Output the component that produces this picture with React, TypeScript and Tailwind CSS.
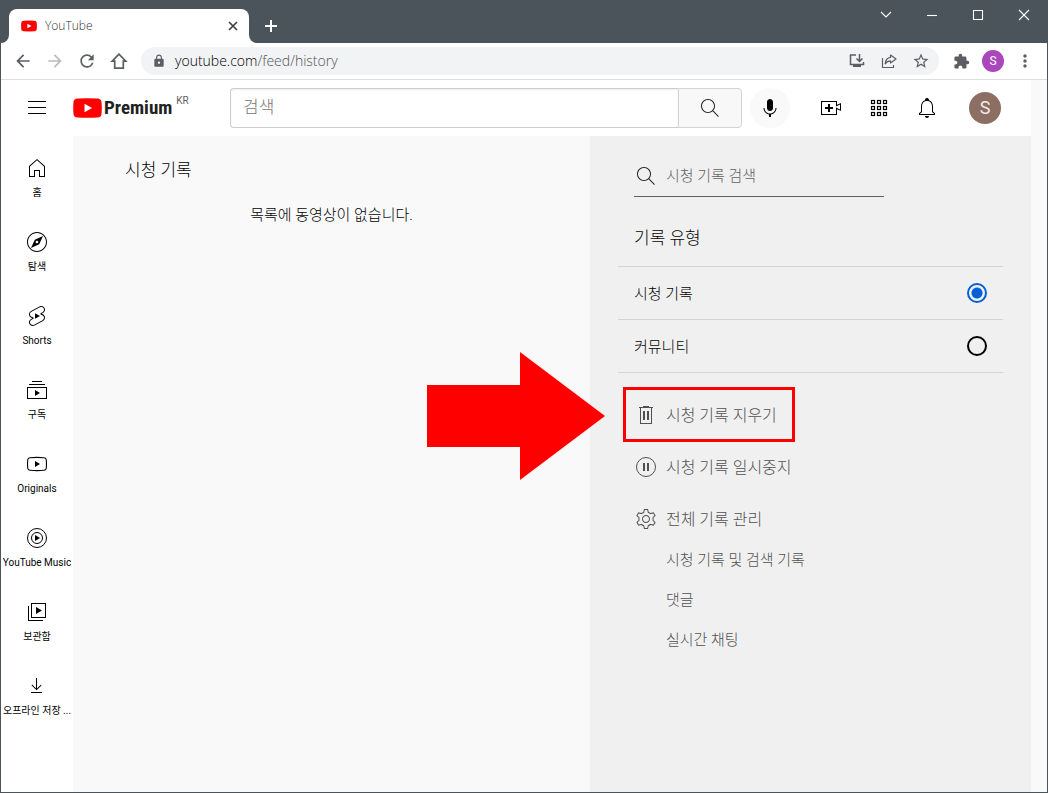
import type { ReactNode } from 'react'
import { MdArrowBack, MdArrowForward, MdExtension, MdLock, MdMoreVert, MdRefresh, MdStarBorder } from 'react-icons/md'

type IconProps = { d?: string; className?: string; children?: ReactNode }

function Icon({ d, className = '', children }: IconProps) {
  return (
    <svg viewBox="0 0 24 24" className={`size-6 shrink-0 fill-current ${className}`} aria-hidden="true">
      {d && <path d={d} />}
      {children}
    </svg>
  )
}

const SEARCH =
  'M20.87,20.17l-5.59-5.59C16.35,13.35,17,11.75,17,10c0-3.87-3.13-7-7-7s-7,3.13-7,7s3.13,7,7,7c1.75,0,3.35-0.65,4.58-1.71l5.59,5.59L20.87,20.17z M10,16c-3.31,0-6-2.69-6-6s2.69-6,6-6s6,2.69,6,6S13.31,16,10,16z'
const HOME = 'M12,4.33l7,6.12V20H15V14H9v6H5V10.45l7-6.12M12,3,4,10V21h6V15h4v6h6V10L12,3Z'
const EXPLORE =
  'M9.8,9.8l-3.83,8.23l8.23-3.83l3.83-8.23L9.8,9.8z M13.08,12.77c-0.21,0.29-0.51,0.48-0.86,0.54c-0.07,0.01-0.15,0.02-0.22,0.02c-0.28,0-0.54-0.08-0.77-0.25c-0.29-0.21-0.48-0.51-0.54-0.86c-0.06-0.35,0.02-0.71,0.23-0.99c0.21-0.29,0.51-0.48,0.86-0.54c0.35-0.06,0.7,0.02,0.99,0.23c0.29,0.21,0.48,0.51,0.54,0.86C13.37,12.13,13.29,12.48,13.08,12.77z M12,3c4.96,0,9,4.04,9,9s-4.04,9-9,9s-9-4.04-9-9S7.04,3,12,3 M12,2C6.48,2,2,6.48,2,12s4.48,10,10,10s10-4.48,10-10S17.52,2,12,2L12,2z'
const SHORTS =
  'M10 14.65v-5.3L15 12l-5 2.65zm7.77-4.33-1.2-.5L18 9.06c1.84-.96 2.53-3.23 1.56-5.06s-3.24-2.53-5.07-1.56L6 6.94c-1.29.68-2.07 2.04-2 3.49.07 1.42.93 2.67 2.22 3.25.03.01 1.2.5 1.2.5L6 14.93c-1.83.97-2.53 3.24-1.56 5.07.97 1.83 3.24 2.53 5.07 1.56l8.5-4.5c1.29-.68 2.06-2.04 1.99-3.49-.07-1.42-.94-2.68-2.23-3.25zm-.23 5.86-8.5 4.5c-1.34.71-3.01.2-3.72-1.14-.71-1.34-.2-3.01 1.14-3.72l2.04-1.08v-1.21l-.69-.28-1.11-.46c-.99-.41-1.65-1.35-1.7-2.41-.05-1.06.52-2.06 1.46-2.56l8.5-4.5c1.34-.71 3.01-.2 3.72 1.14.71 1.34.2 3.01-1.14 3.72L15.5 9.26v1.21l1.8.74c.99.41 1.65 1.35 1.7 2.41.05 1.06-.52 2.06-1.46 2.56z'
const SUBSCRIPTIONS = 'M10,18v-6l5,3L10,18z M17,3H7v1h10V3z M20,6H4v1h16V6z M22,9H2v12h20V9z M3,10h18v10H3V10z'
const LIBRARY = 'M11,7l6,3.5L11,14V7L11,7z M18,20H4V6H3v15h15V20z M21,18H6V3h15V18z M7,17h13V4H7V17z'
const DOWNLOAD = 'M17,18v1H6v-1H17z M16.5,11.4l-0.7-0.7L12,14.4V4h-1v10.4l-3.8-3.8l-0.7,0.7l5,5L16.5,11.4z'
const TRASH = 'M11,17H9V8h2V17z M15,8h-2v9h2V8z M19,4v1h-1v16H6V5H5V4h4V3h6v1H19z M17,5H7v15h10V5z'
const CREATE =
  'M14,13h-3v3H9v-3H6v-2h3V8h2v3h3V13z M17,6H3v12h14v-6.39l4,1.83V8.56l-4,1.83V6 M18,5v3.83L22,7v8l-4-1.83V19H2V5H18L18,5z'
const BELL =
  'M10,20h4c0,1.1-0.9,2-2,2S10,21.1,10,20z M20,17.35V19H4v-1.65l2-1.88v-5.15c0-2.92,1.56-5.22,4-5.98V3.96c0-1.42,1.49-2.5,2.99-1.76C13.64,2.52,14,3.23,14,3.96l0,0.39c2.44,0.75,4,3.06,4,5.98v5.15L20,17.35z M19,17.77l-2-1.88v-5.47c0-2.47-1.19-4.36-3.13-5.1c-1.26-0.53-2.64-0.5-3.84,0.03C8.15,6.11,7,7.99,7,10.42v5.47l-2,1.88V18h14V17.77z'
const MIC =
  'M12 3C10.34 3 9 4.37 9 6.07V11.93C9 13.63 10.34 15 12 15C13.66 15 15 13.63 15 11.93V6.07C15 4.37 13.66 3 12 3ZM18.5 12H17.5C17.5 15.03 15.03 17.5 12 17.5C8.97 17.5 6.5 15.03 6.5 12H5.5C5.5 15.24 7.89 17.93 11 18.41V21H13V18.41C16.11 17.93 18.5 15.24 18.5 12Z'
const GEAR =
  'M12,9c1.65,0,3,1.35,3,3s-1.35,3-3,3s-3-1.35-3-3S10.35,9,12,9 M12,8c-2.21,0-4,1.79-4,4s1.79,4,4,4s4-1.79,4-4S14.21,8,12,8L12,8z M13.22,3l0.55,2.2l0.13,0.51l0.5,0.18c0.61,0.23,1.19,0.56,1.72,0.98l0.4,0.32l0.5-0.14l2.17-0.62l1.22,2.11l-1.63,1.59l-0.37,0.36l0.08,0.51c0.05,0.32,0.08,0.64,0.08,0.98s-0.03,0.66-0.08,0.98l-0.08,0.51l0.37,0.36l1.63,1.59l-1.22,2.11l-2.17-0.62l-0.5-0.14l-0.4,0.32c-0.53,0.43-1.11,0.76-1.72,0.98l-0.5,0.18l-0.13,0.51L13.22,21h-2.44l-0.55-2.2l-0.13-0.51l-0.5-0.18C9,17.88,8.42,17.55,7.88,17.12l-0.4-0.32l-0.5,0.14l-2.17,0.62L3.6,15.44l1.63-1.59l0.37-0.36l-0.08-0.51C5.47,12.66,5.44,12.33,5.44,12s0.03-0.66,0.08-0.98l0.08-0.51l-0.37-0.36L3.6,8.56l1.22-2.11l2.17,0.62l0.5,0.14l0.4-0.32C8.42,6.45,9,6.12,9.61,5.9l0.5-0.18l0.13-0.51L10.78,3H13.22 M14,2h-4L9.26,4.96c-0.73,0.27-1.4,0.66-2,1.14L4.34,5.27l-2,3.46l2.19,2.13C4.47,11.23,4.44,11.61,4.44,12s0.03,0.77,0.09,1.14l-2.19,2.13l2,3.46l2.92-0.83c0.6,0.48,1.27,0.87,2,1.14L10,22h4l0.74-2.96c0.73-0.27,1.4-0.66,2-1.14l2.92,0.83l2-3.46l-2.19-2.13c0.06-0.37,0.09-0.75,0.09-1.14s-0.03-0.77-0.09-1.14l2.19-2.13l-2-3.46L16.74,6.1c-0.6-0.48-1.27-0.87-2-1.14L14,2L14,2z'

const sidebarItems: { label: string; icon: ReactNode }[] = [
  { label: '홈', icon: <Icon d={HOME} /> },
  { label: '탐색', icon: <Icon d={EXPLORE} /> },
  { label: 'Shorts', icon: <Icon d={SHORTS} /> },
  { label: '구독', icon: <Icon d={SUBSCRIPTIONS} /> },
  {
    label: 'Originals',
    icon: (
      <Icon d="M10 9l5 3-5 3z">
        <path
          d="M5 5.7Q12 5 19 5.7Q21.2 5.9 21.3 8Q21.7 12 21.3 16Q21.2 18.1 19 18.3Q12 19 5 18.3Q2.8 18.1 2.7 16Q2.3 12 2.7 8Q2.8 5.9 5 5.7z"
          fill="none"
          stroke="currentColor"
          strokeWidth="1.1"
        />
      </Icon>
    ),
  },
  {
    label: 'YouTube Music',
    icon: (
      <Icon d="M10 9l5 3-5 3z">
        <circle cx="12" cy="12" r="9.5" fill="none" stroke="currentColor" />
        <circle cx="12" cy="12" r="5.5" fill="none" stroke="currentColor" />
      </Icon>
    ),
  },
  { label: '보관함', icon: <Icon d={LIBRARY} /> },
  { label: '오프라인 저장 ...', icon: <Icon d={DOWNLOAD} /> },
]

function PlayBadge({ className }: { className: string }) {
  return (
    <svg viewBox="0 0 29 20" className={className} aria-hidden="true">
      <path
        d="M4.5.4Q14.500 0 24.500.4Q28 .7 28.400 3.500Q29.200 10 28.400 16.500Q28 19.300 24.500 19.600Q14.500 20 4.500 19.600Q1 19.300.6 16.500Q-.2 10 .6 3.500Q1 .7 4.500.4z"
        fill="#ff0000"
      />
      <path d="M11.500 5.700v8.600l7.600-4.300z" fill="#fff" />
    </svg>
  )
}

function TitleBar() {
  return (
    <div className="flex h-[42px] items-start bg-[#4b545b] text-white">
      <div className="flex items-end self-stretch">
        <svg viewBox="0 0 8 8" className="size-2 fill-white" aria-hidden="true">
          <path d="M8 0v8H0a8 8 0 0 0 8-8z" />
        </svg>
        <div className="flex h-[34px] w-60 items-center rounded-t-lg bg-white pr-2 pl-3 text-[#303336]">
          <PlayBadge className="h-3 w-4" />
          <span className="ml-2 flex-1 font-['Open_Sans'] text-xs font-light">YouTube</span>
          <button aria-label="탭 닫기" className="flex size-4 items-center justify-center">
            <svg viewBox="0 0 10 10" className="size-[10px]" stroke="#3c4043" strokeWidth="1.700">
              <path d="M1 1l8 8M9 1l-8 8" />
            </svg>
          </button>
        </div>
        <svg viewBox="0 0 8 8" className="size-2 fill-white" aria-hidden="true">
          <path d="M0 0v8h8a8 8 0 0 1-8-8z" />
        </svg>
      </div>
      <button aria-label="새 탭" className="mt-[11px] flex size-7 items-center justify-center">
        <svg viewBox="0 0 12 12" className="size-3" stroke="currentColor" strokeWidth="2">
          <path d="M6 0v12M0 6h12" />
        </svg>
      </button>
      <div className="ml-auto flex">
        {[
          ['탭 검색', 'M1 3l5 5 5-5'],
          ['최소화', 'M1 6.500h10'],
          ['최대화', 'M1.500 1.500h9v9h-9z'],
          ['닫기', 'M1 1l10 10M11 1l-10 10'],
        ].map(([label, d]) => (
          <button key={label} aria-label={label} className="flex h-7 w-[46px] items-center justify-center">
            <svg viewBox="0 0 12 12" className="size-3" fill="none" stroke="currentColor" strokeWidth="1.100">
              <path d={d} />
            </svg>
          </button>
        ))}
      </div>
    </div>
  )
}

function ToolButton({ label, children, className = '' }: { label: string; children: ReactNode; className?: string }) {
  return (
    <button aria-label={label} className={`flex h-7 w-8 shrink-0 items-center justify-center ${className}`}>
      {children}
    </button>
  )
}

function AddressBar() {
  return (
    <div className="flex h-[37px] items-center gap-[6px] border-b border-[#dcdde0] bg-white px-[6px] text-[#5a5e63]">
      <div className="flex">
        <ToolButton label="뒤로">
          <MdArrowBack className="size-5" />
        </ToolButton>
        <ToolButton label="앞으로" className="text-[#b9bbbe]">
          <MdArrowForward className="size-5" />
        </ToolButton>
        <ToolButton label="새로고침">
          <MdRefresh className="size-5" />
        </ToolButton>
        <ToolButton label="홈페이지">
          <svg viewBox="0 0 20 20" className="size-5" fill="none" stroke="currentColor" strokeWidth="1.700">
            <path d="M10 3.200L3.200 10.200h2.500v7h8.600v-7h2.500z" />
          </svg>
        </ToolButton>
      </div>
      <div className="flex h-7 flex-1 items-center rounded-full bg-[#f1f3f4] pr-[2px] pl-[11px]">
        <MdLock className="size-[14px]" />
        <div className="ml-[9px] flex-1 font-['Open_Sans'] text-sm font-light text-[#505357]">
          <span className="text-black">youtube.com</span>/feed/history
        </div>
        <ToolButton label="앱 설치">
          <svg viewBox="0 0 16 16" className="size-4" fill="none" stroke="currentColor" strokeWidth="1.500">
            <path d="M7 2H1.500v9.500h13V9M10.500 1v7M7.500 5.500l3 3 3-3" />
            <path d="M4 12h8v2H4z" fill="currentColor" stroke="none" />
          </svg>
        </ToolButton>
        <ToolButton label="공유">
          <svg viewBox="0 0 16 16" className="size-4" fill="none" stroke="currentColor" strokeWidth="1.200">
            <path d="M1.500 5v9.500h11V12" />
            <path d="M9.500 2l5.500 4-5.500 4V7.800C7 7.800 5.500 8.800 4.200 10.800 4.500 7 6.500 4.700 9.500 4.400z" strokeLinejoin="round" />
          </svg>
        </ToolButton>
        <ToolButton label="북마크">
          <MdStarBorder className="size-[18px]" />
        </ToolButton>
      </div>
      <div className="flex">
        <ToolButton label="확장 프로그램">
          <MdExtension className="size-[17px]" />
        </ToolButton>
        <ToolButton label="프로필">
          <span className="flex size-[22px] items-center justify-center rounded-full bg-[#ab47bc] text-xs text-white">S</span>
        </ToolButton>
        <ToolButton label="메뉴">
          <MdMoreVert className="size-5" />
        </ToolButton>
      </div>
    </div>
  )
}

function Masthead() {
  return (
    <header className="flex h-14 items-center bg-white pr-[30px]">
      <div className="flex w-[229px] shrink-0 items-center pl-6">
        <button aria-label="가이드">
          <Icon d="M21,6H3V5h18V6z M21,11H3v1h18V11z M21,17H3v1h18V17z" />
        </button>
        <a href="#" className="ml-6 flex items-center">
          <PlayBadge className="h-5 w-[29px]" />
          <span className="ml-[2px] font-['Liberation_Sans_Narrow','Roboto_Condensed',sans-serif] text-[19px] leading-6 font-bold text-[#212121]">
            Premium
          </span>
          <span className="ml-1 self-start text-[10px] leading-[10px] text-[#606060]">KR</span>
        </a>
      </div>
      <form className="flex h-10 flex-1" onSubmit={(e) => e.preventDefault()}>
        <input
          aria-label="검색"
          placeholder="검색"
          className="min-w-0 flex-1 rounded-l-sm border border-r-0 border-[#ccc] bg-white px-3 text-[17px] font-light shadow-[inset_0_1px_2px_#eee] outline-none placeholder:text-[#777]"
        />
        <button
          aria-label="검색 실행"
          className="flex w-16 items-center justify-center rounded-r-sm border border-[#d3d3d3] bg-[#f8f8f8] text-[#222]"
        >
          <Icon d={SEARCH} />
        </button>
      </form>
      <button aria-label="음성 검색" className="ml-2 flex size-10 items-center justify-center rounded-full bg-[#f9f9f9]">
        <Icon d={MIC} />
      </button>
      <div className="ml-[29px] flex gap-6">
        <button aria-label="만들기">
          <Icon d={CREATE} />
        </button>
        <button aria-label="앱">
          <Icon>
            <g fill="none" stroke="currentColor" strokeWidth="1.200">
              {[4, 10, 16].map((y) =>
                [4, 10, 16].map((x) => <rect key={`${x}-${y}`} x={x + 0.5} y={y + 0.5} width="3" height="3" />),
              )}
            </g>
          </Icon>
        </button>
        <button aria-label="알림">
          <Icon d={BELL} />
        </button>
      </div>
      <button
        aria-label="계정"
        className="ml-[30px] flex size-8 items-center justify-center rounded-full bg-[#8d6e63] text-lg text-[#efebe9]"
      >
        S
      </button>
    </header>
  )
}

function Sidebar() {
  return (
    <nav className="w-[72px] shrink-0 bg-white pt-1">
      {sidebarItems.map(({ label, icon }) => (
        <a key={label} href="#" className="flex h-[74px] flex-col items-center gap-[6px] pt-4">
          {icon}
          <span className="text-[10px] leading-[14px] whitespace-nowrap">{label}</span>
        </a>
      ))}
    </nav>
  )
}

function HistoryType({ label, checked }: { label: string; checked?: boolean }) {
  return (
    <label className="flex h-[53px] items-center justify-between border-b border-[#d4d4d4] px-4 text-[15px] font-light">
      <span className="pt-[2px]">{label}</span>
      <input
        type="radio"
        name="history-type"
        defaultChecked={checked}
        className="size-5 appearance-none rounded-full border-2 border-black checked:border-[#065fd4] checked:bg-[radial-gradient(circle,#065fd4_5px,transparent_6px)]"
      />
    </label>
  )
}

function ActionButton({ icon, label }: { icon: ReactNode; label: string }) {
  return (
    <button className="flex h-10 items-center gap-2 text-base font-light">
      {icon}
      <span className="pt-[2px]">{label}</span>
    </button>
  )
}

function HistoryPanel() {
  return (
    <aside className="w-[441px] shrink-0 bg-[#f0f0f0] px-7 pt-4">
      <div className="ml-4 flex h-[45px] w-[250px] items-center gap-2 border-b border-[#606060] pt-1">
        <Icon d={SEARCH} className="text-[#222]" />
        <input
          aria-label="시청 기록 검색"
          placeholder="시청 기록 검색"
          className="min-w-0 flex-1 bg-transparent text-[15px] font-light outline-none placeholder:text-[#606060]"
        />
      </div>
      <h2 className="mt-[29px] border-b border-[#d4d4d4] px-4 pb-[15px] text-[17px] leading-[25px] font-light">기록 유형</h2>
      <HistoryType label="시청 기록" checked />
      <HistoryType label="커뮤니티" />
      <ul className="mt-[22px] ml-4 flex flex-col gap-3 text-[#505050]">
        <li className="relative w-fit">
          <ActionButton icon={<Icon d={TRASH} />} label="시청 기록 지우기" />
          <span className="pointer-events-none absolute -top-2 -right-[18px] -bottom-[7px] -left-[11px] border-3 border-[#ff0000]" />
          <svg
            viewBox="0 0 178 128"
            className="pointer-events-none absolute -top-[43px] right-full mr-[29px] h-32 w-[178px] max-w-none"
            aria-hidden="true"
          >
            <path d="M0 33h93V0l85 64-85 64V95H0z" fill="#ff0000" />
          </svg>
        </li>
        <li>
          <ActionButton
            icon={
              <Icon d="M11,16H9V8h2V16z M15,8h-2v8h2V8z">
                <circle cx="12" cy="12" r="9.5" fill="none" stroke="currentColor" />
              </Icon>
            }
            label="시청 기록 일시중지"
          />
        </li>
        <li>
          <ActionButton icon={<Icon d={GEAR} />} label="전체 기록 관리" />
          <ul className="ml-8 text-[15px] font-light">
            {['시청 기록 및 검색 기록', '댓글', '실시간 채팅'].map((text) => (
              <li key={text}>
                <a href="#" className="flex h-10 items-center pt-[2px]">
                  {text}
                </a>
              </li>
            ))}
          </ul>
        </li>
      </ul>
    </aside>
  )
}

export default function App() {
  return (
    <div className="flex min-h-screen flex-col border border-[#4b545b] bg-white font-['Roboto','Noto_Sans_CJK_KR',sans-serif] text-[#030303]">
      <TitleBar />
      <AddressBar />
      <div className="flex flex-1 bg-[#f9f9f9] pr-4">
        <div className="flex min-w-0 flex-1 flex-col">
          <Masthead />
          <div className="flex flex-1">
            <Sidebar />
            <main className="min-w-0 flex-1 bg-[#f9f9f9] pt-[22px] font-light">
              <h1 className="pl-[52px] text-[17px] leading-[25px]">시청 기록</h1>
              <p className="mt-5 text-center text-[15px] leading-[24px]">목록에 동영상이 없습니다.</p>
            </main>
            <HistoryPanel />
          </div>
        </div>
      </div>
    </div>
  )
}
